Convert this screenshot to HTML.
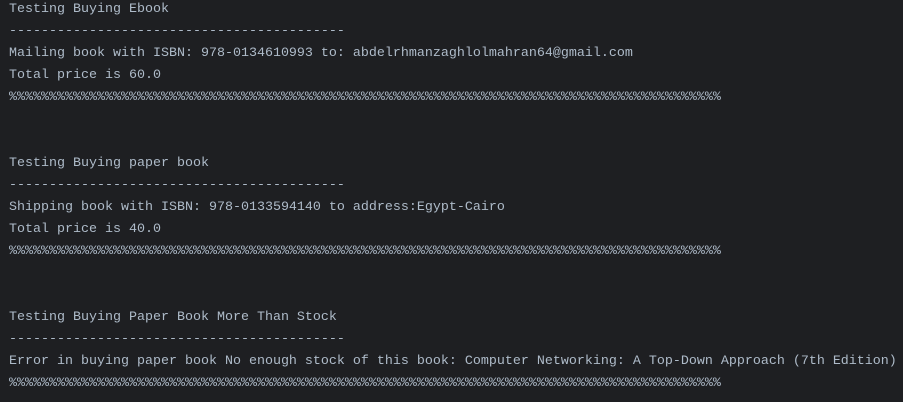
<!DOCTYPE html>
<html><head><meta charset="utf-8"><style>
html,body{margin:0;padding:0;background:#1e1f22;width:903px;height:402px;overflow:hidden}
pre{margin:0;position:absolute;left:9px;top:-1px;font-family:"Liberation Mono",monospace;font-size:13.33px;line-height:22px;color:#aebbc9;white-space:pre}
</style></head><body>
<pre>Testing Buying Ebook
------------------------------------------
Mailing book with ISBN: 978-0134610993 to: abdelrhmanzaghlolmahran64@gmail.com
Total price is 60.0
%%%%%%%%%%%%%%%%%%%%%%%%%%%%%%%%%%%%%%%%%%%%%%%%%%%%%%%%%%%%%%%%%%%%%%%%%%%%%%%%%%%%%%%%%


Testing Buying paper book
------------------------------------------
Shipping book with ISBN: 978-0133594140 to address:Egypt-Cairo
Total price is 40.0
%%%%%%%%%%%%%%%%%%%%%%%%%%%%%%%%%%%%%%%%%%%%%%%%%%%%%%%%%%%%%%%%%%%%%%%%%%%%%%%%%%%%%%%%%


Testing Buying Paper Book More Than Stock
------------------------------------------
Error in buying paper book No enough stock of this book: Computer Networking: A Top-Down Approach (7th Edition)
%%%%%%%%%%%%%%%%%%%%%%%%%%%%%%%%%%%%%%%%%%%%%%%%%%%%%%%%%%%%%%%%%%%%%%%%%%%%%%%%%%%%%%%%%</pre>
</body></html>
